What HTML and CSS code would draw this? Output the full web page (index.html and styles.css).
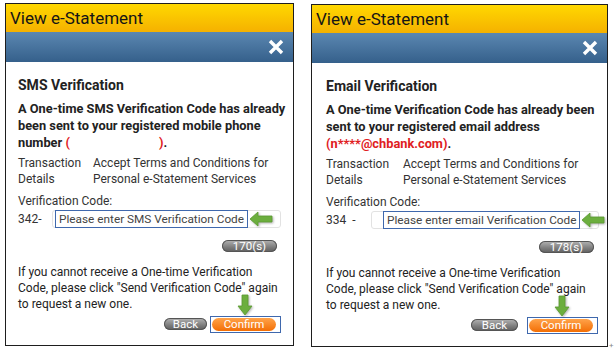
FILE: index.html
```html
<!DOCTYPE html>
<html lang="en">
<head>
  <meta charset="UTF-8">
  <title>View e-Statement</title>
  <link rel="stylesheet" href="styles.css">
</head>
<body>
  <div class="page">
    <!-- SMS verification -->
    <div class="panel panel-sms">
      <div class="head">View e-Statement</div>
      <div class="bar">
        <svg class="close" width="16" height="16" viewBox="0 0 16 16"><path d="M2 2L14 14M14 2L2 14" stroke="#fff" stroke-width="3.4"/></svg>
      </div>
      <div class="content">
        <h2 class="title">SMS Verification</h2>
        <p class="lead">A One-time SMS Verification Code has already been sent to your registered mobile phone number <span class="red">(&nbsp;&nbsp;&nbsp;&nbsp;&nbsp;&nbsp;&nbsp;&nbsp;&nbsp;&nbsp;&nbsp;&nbsp;&nbsp;&nbsp;&nbsp;&nbsp;&nbsp;&nbsp;&nbsp;&nbsp;&nbsp;&nbsp;&nbsp;&nbsp;&nbsp;&nbsp;&nbsp;&nbsp;)</span>.</p>
        <div class="details">
          <span>Transaction Details</span>
          <span>Accept Terms and Conditions for Personal e-Statement Services</span>
        </div>
        <div class="code-label">Verification Code:</div>
        <div class="code-row">
          <span class="prefix">342-</span>
          <div class="field">
            <span class="hint">Please enter SMS Verification Code</span>
            <svg class="arrow-left" width="24" height="16" viewBox="0 0 24 16"><path d="M1 8L9 1V5H23V11H9V15Z" fill="#6cae3e" stroke="#5a9a30" stroke-width="0.8"/></svg>
          </div>
        </div>
        <div class="timer-row"><span class="pill">170(s)</span></div>
        <p class="note">If you cannot receive a One-time Verification Code, please click "Send Verification Code" again to request a new one.</p>
        <div class="actions">
          <span class="pill btn-back">Back</span>
          <div class="confirm-wrap">
            <svg class="arrow-down" width="16" height="22" viewBox="0 0 16 22"><path d="M5 1H11V12H15L8 21L1 12H5Z" fill="#6cae3e" stroke="#5a9a30" stroke-width="0.8"/></svg>
            <span class="mark"><span class="btn-confirm">Confirm</span></span>
          </div>
        </div>
      </div>
    </div>

    <!-- Email verification -->
    <div class="panel panel-email">
      <div class="head">View e-Statement</div>
      <div class="bar">
        <svg class="close" width="16" height="16" viewBox="0 0 16 16"><path d="M2 2L14 14M14 2L2 14" stroke="#fff" stroke-width="3.4"/></svg>
      </div>
      <div class="content">
        <h2 class="title">Email Verification</h2>
        <p class="lead">A One-time Verification Code has already been sent to your registered email address <span class="red">(n****@chbank.com)</span>.</p>
        <div class="details">
          <span>Transaction Details</span>
          <span>Accept Terms and Conditions for Personal e-Statement Services</span>
        </div>
        <div class="code-label">Verification Code:</div>
        <div class="code-row">
          <span class="prefix">334&nbsp; -</span>
          <div class="field">
            <span class="hint">Please enter email Verification Code</span>
            <svg class="arrow-left" width="24" height="16" viewBox="0 0 24 16"><path d="M1 8L9 1V5H23V11H9V15Z" fill="#6cae3e" stroke="#5a9a30" stroke-width="0.8"/></svg>
          </div>
        </div>
        <div class="timer-row"><span class="pill">178(s)</span></div>
        <p class="note">If you cannot receive a One-time Verification Code, please click "Send Verification Code" again to request a new one.</p>
        <div class="actions">
          <span class="pill btn-back">Back</span>
          <div class="confirm-wrap">
            <svg class="arrow-down" width="16" height="22" viewBox="0 0 16 22"><path d="M5 1H11V12H15L8 21L1 12H5Z" fill="#6cae3e" stroke="#5a9a30" stroke-width="0.8"/></svg>
            <span class="mark"><span class="btn-confirm">Confirm</span></span>
          </div>
        </div>
      </div>
    </div>
  </div>
  <span class="corner">+</span>
</body>
</html>
```

FILE: styles.css
```css
* {
  box-sizing: border-box;
}

body {
  margin: 0;
  background: #fff;
  font-family: Roboto, "Noto Sans", Arial, sans-serif;
  color: #222;
}

.page {
  display: flex;
  gap: 17px;
  padding: 3px 0 0 5px;
}

.panel {
  width: 289px;
  height: 343px;
  border: 1px solid #1e1e1e;
  display: flex;
  flex-direction: column;
  background: #fff;
}

.panel-email {
  width: 297px;
  margin-top: 1px;
}

.head {
  flex-shrink: 0;
  height: 28px;
  line-height: 28px;
  padding-left: 4px;
  font-size: 17px;
  color: #151515;
  background: linear-gradient(#ffd800, #f5b100);
}

.bar {
  flex-shrink: 0;
  height: 30px;
  display: flex;
  align-items: center;
  justify-content: flex-end;
  padding-right: 9px;
  background: linear-gradient(#5b87b1, #35608b);
}

.content {
  padding: 15px 12px 0 12px;
}

.panel-email .content {
  padding-left: 14px;
}

.title {
  margin: 0 0 7px;
  font-size: 14px;
  font-weight: bold;
}

.lead {
  margin: 0 -7px 0 0;
  font-size: 12.8px;
  line-height: 17px;
  font-weight: bold;
}

.red {
  color: #e0201e;
}

.details {
  display: grid;
  grid-template-columns: 75px 1fr;
  margin-top: 4px;
  font-size: 12px;
  line-height: 16px;
  color: #333;
}

.panel-email .details {
  grid-template-columns: 77px 1fr;
}

.code-label {
  margin-top: 6px;
  font-size: 12px;
  line-height: 17px;
  color: #333;
}

.code-row {
  display: flex;
  align-items: center;
  font-size: 12px;
  color: #333;
}

.prefix {
  flex-shrink: 0;
  width: 34px;
}

.panel-email .prefix {
  width: 45px;
}

.field {
  flex: 1;
  min-width: 0;
  height: 18px;
  display: flex;
  align-items: center;
  border: 1px solid #e2e2e2;
  border-radius: 3px;
  padding-left: 2px;
}

.panel-email .field {
  padding-left: 11px;
  margin-right: -4px;
}

.hint {
  flex-shrink: 0;
  height: 18px;
  line-height: 16px;
  padding: 0 3px;
  border: 1.5px solid #3f68ad;
  font-size: 11.8px;
  color: #444;
  white-space: nowrap;
}

.arrow-left {
  flex-shrink: 0;
  margin-left: 1px;
  filter: drop-shadow(1px 1px 1px rgba(0, 0, 0, 0.3));
}

.timer-row {
  display: flex;
  justify-content: flex-end;
  margin-top: 12px;
  padding-right: 4px;
}

.panel-email .timer-row {
  padding-right: 1px;
}

.pill {
  display: inline-block;
  width: 55px;
  height: 12px;
  line-height: 12px;
  border-radius: 6px;
  text-align: center;
  font-size: 11.5px;
  color: #fff;
  background: linear-gradient(#b4b4b4, #7d7d7d 60%, #5e5e5e);
  box-shadow: inset 0 0 0 1px #555;
}

.note {
  max-width: 262px;
  margin: 12px 0 0;
  font-size: 12px;
  line-height: 16px;
  color: #222;
}

.actions {
  display: flex;
  justify-content: flex-end;
  align-items: flex-end;
  gap: 3px;
  margin-top: -18px;
}

.panel-email .actions {
  margin-right: -3px;
}

.btn-back {
  width: 43px;
  margin-bottom: 3px;
}

.panel-email .btn-back {
  width: 47px;
  margin-right: 6px;
}

.confirm-wrap {
  display: flex;
  flex-direction: column;
  align-items: center;
}

.arrow-down {
  margin-left: -2px;
  filter: drop-shadow(1px 1px 1px rgba(0, 0, 0, 0.3));
}

.mark {
  display: block;
  border: 1.5px solid #3f68ad;
  padding: 1px 4px 1px 1px;
}

.btn-confirm {
  display: block;
  width: 64px;
  height: 13px;
  line-height: 13px;
  border-radius: 7px;
  text-align: center;
  font-size: 11.5px;
  color: #fff;
  background: linear-gradient(#ffa34a, #f36e05);
}

.corner {
  position: absolute;
  left: 609px;
  top: 341px;
  font-size: 8px;
  color: #888;
}
```
